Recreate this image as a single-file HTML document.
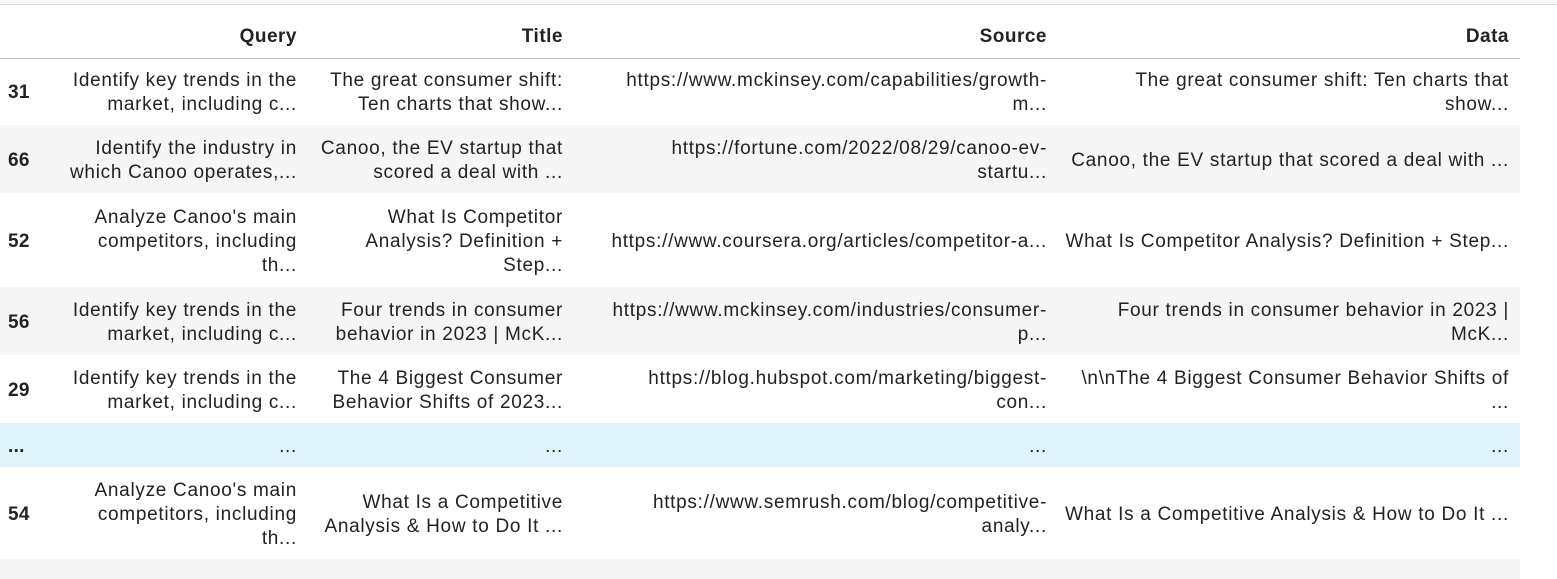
<!DOCTYPE html>
<html><head><style>
body{margin:0;background:#fff;width:1557px;height:571px;overflow:hidden;font-family:"Liberation Sans",sans-serif;color:#222;}
.top{position:absolute;left:0;top:0;width:1557px;height:4px;background:#f7f7f7;border-bottom:1px solid #ddd;}
table{position:absolute;left:0;top:5px;border-collapse:collapse;table-layout:fixed;width:1520px;font-size:19px;letter-spacing:0.7px;line-height:24px;}
td,th{text-align:right;padding:3px 8px 0 0;vertical-align:middle;overflow:hidden;white-space:nowrap;box-sizing:border-box;}
th{font-weight:bold;height:53px;padding-top:11px;letter-spacing:0.5px;}
thead tr{border-bottom:1px solid #bbb;}
td.i{text-align:left;padding-left:8px;font-weight:bold;letter-spacing:0.3px;}
tr.g{background:#f5f5f5;}
tr.h{background:#dff3fb;}
</style></head><body>
<div class="top"></div>
<table>
<colgroup><col style="width:50px"><col style="width:255px"><col style="width:266px"><col style="width:484px"><col style="width:465px"></colgroup>
<thead><tr><th></th><th>Query</th><th>Title</th><th>Source</th><th style="padding-right:11px">Data</th></tr></thead>
<tbody>
<tr style="height:67px"><td class="i">31</td><td>Identify key trends in the<br>market, including c...</td><td>The great consumer shift:<br>Ten charts that show...</td><td>https://www.mckinsey.com/capabilities/growth-<br>m...</td><td style="padding-right:11px">The great consumer shift: Ten charts that<br>show...</td></tr>
<tr class="g" style="height:68px"><td class="i">66</td><td>Identify the industry in<br>which Canoo operates,...</td><td>Canoo, the EV startup that<br>scored a deal with ...</td><td>https://fortune.com/2022/08/29/canoo-ev-<br>startu...</td><td style="padding-right:11px">Canoo, the EV startup that scored a deal with ...</td></tr>
<tr style="height:94px"><td class="i">52</td><td>Analyze Canoo's main<br>competitors, including<br>th...</td><td>What Is Competitor<br>Analysis? Definition +<br>Step...</td><td>https://www.coursera.org/articles/competitor-a...</td><td style="padding-right:11px">What Is Competitor Analysis? Definition + Step...</td></tr>
<tr class="g" style="height:68px"><td class="i">56</td><td>Identify key trends in the<br>market, including c...</td><td>Four trends in consumer<br>behavior in 2023 | McK...</td><td>https://www.mckinsey.com/industries/consumer-<br>p...</td><td style="padding-right:11px">Four trends in consumer behavior in 2023 |<br>McK...</td></tr>
<tr style="height:68px"><td class="i">29</td><td>Identify key trends in the<br>market, including c...</td><td>The 4 Biggest Consumer<br>Behavior Shifts of 2023...</td><td>https://blog.hubspot.com/marketing/biggest-<br>con...</td><td style="padding-right:11px">\n\nThe 4 Biggest Consumer Behavior Shifts of<br>...</td></tr>
<tr class="h" style="height:44px"><td class="i">...</td><td>...</td><td>...</td><td>...</td><td style="padding-right:11px">...</td></tr>
<tr style="height:92px"><td class="i">54</td><td>Analyze Canoo's main<br>competitors, including<br>th...</td><td>What Is a Competitive<br>Analysis &amp; How to Do It ...</td><td>https://www.semrush.com/blog/competitive-<br>analy...</td><td style="padding-right:11px">What Is a Competitive Analysis &amp; How to Do It ...</td></tr>
<tr class="g" style="height:20px"><td></td><td></td><td></td><td></td><td></td></tr>
</tbody></table>
</body></html>
